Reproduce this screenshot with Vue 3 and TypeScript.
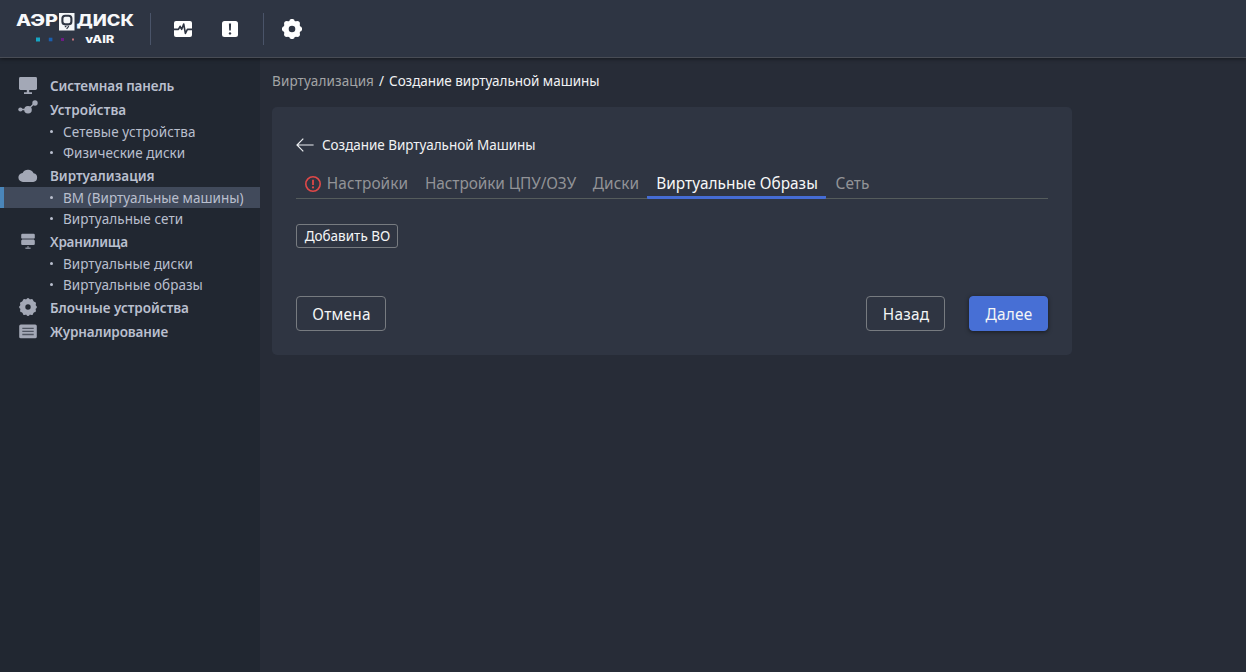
<script setup lang="ts">
type IconName = 'monitor' | 'devices' | 'cloud' | 'storage' | 'gear' | 'log'

interface SubItem {
  label: string
  spacing: number
  active?: boolean
}

interface Section {
  label: string
  icon: IconName
  spacing: number
  children: SubItem[]
}

interface Tab {
  label: string
  width: number
  spacing: number
  error?: boolean
  active?: boolean
}

const sections: Section[] = [
  { label: 'Системная панель', icon: 'monitor', spacing: -0.14, children: [] },
  {
    label: 'Устройства',
    icon: 'devices',
    spacing: 0.02,
    children: [
      { label: 'Сетевые устройства', spacing: 0.13 },
      { label: 'Физические диски', spacing: 0.03 },
    ],
  },
  {
    label: 'Виртуализация',
    icon: 'cloud',
    spacing: -0.03,
    children: [
      { label: 'ВМ (Виртуальные машины)', spacing: 0.03, active: true },
      { label: 'Виртуальные сети', spacing: 0.08 },
    ],
  },
  {
    label: 'Хранилища',
    icon: 'storage',
    spacing: -0.22,
    children: [
      { label: 'Виртуальные диски', spacing: 0.03 },
      { label: 'Виртуальные образы', spacing: 0.04 },
    ],
  },
  { label: 'Блочные устройства', icon: 'gear', spacing: -0.03, children: [] },
  { label: 'Журналирование', icon: 'log', spacing: -0.12, children: [] },
]

const tabs: Tab[] = [
  { label: 'Настройки', width: 120, spacing: 0.1, error: true },
  { label: 'Настройки ЦПУ/ОЗУ', width: 168, spacing: -0.07 },
  { label: 'Диски', width: 63, spacing: 0.1 },
  { label: 'Виртуальные Образы', width: 179, spacing: 0.03, active: true },
  { label: 'Сеть', width: 52, spacing: 0.1 },
]

const px = (n: number): string => `${n}px`

// Centres of the rounded teeth placed around a gear body
const teeth = (count: number, radius: number): { x: number; y: number }[] =>
  Array.from({ length: count }, (_, i) => {
    const a = (i * 2 * Math.PI) / count
    return { x: 10 + radius * Math.sin(a), y: 10 - radius * Math.cos(a) }
  })

const headerTeeth = teeth(8, 7.4)
const menuTeeth = teeth(12, 7.4)
</script>

<template>
  <div class="app">
    <header class="header">
      <svg class="logo" width="134" height="57" viewBox="0 0 134 57">
        <g class="brand">
          <text x="16" y="25.8" textLength="42" lengthAdjust="spacingAndGlyphs">АЭР</text>
          <text x="76.5" y="25.8" textLength="57.5" lengthAdjust="spacingAndGlyphs">ДИСК</text>
        </g>
        <rect x="59" y="13" width="15.5" height="17.5" fill="#f4f6f8" />
        <rect x="62.4" y="15.8" width="9" height="8.6" rx="2.8" fill="none" stroke="#2e3543" stroke-width="2.1" />
        <path d="M68.8 26.2l-2.2 2.8M64.8 26.6h1.6" stroke="#2e3543" stroke-width="1.2" fill="none" />
        <rect x="36" y="37.5" width="4" height="4" fill="#16a6c4" />
        <rect x="48.8" y="37.7" width="3.6" height="3.6" fill="#1b5fae" />
        <rect x="61" y="38" width="3" height="3" fill="#6d1b83" />
        <rect x="72" y="38.5" width="2" height="2" fill="#c0737c" />
        <text class="product" x="85.3" y="43" textLength="29" lengthAdjust="spacingAndGlyphs">vAIR</text>
      </svg>
      <span class="divider divider-first"></span>
      <svg class="tool" width="20" height="18" viewBox="0 0 20 18">
        <rect x="1" y="1" width="18" height="16" rx="2" fill="#fff" />
        <path d="M0 9.4h5.4l1.7-3.1 1.6 3 2-5.3 1.7 9.4 2-4h5.6" fill="none" stroke="#2e3543" stroke-width="1.6" stroke-linejoin="round" />
      </svg>
      <svg class="tool alert" width="18" height="18" viewBox="0 0 18 18">
        <rect x="1" y="1" width="16" height="16" rx="2.5" fill="#fff" />
        <path d="M7.9 3.6h2.2l-.3 6.8H8.2z" fill="#2e3543" />
        <circle cx="9" cy="13.4" r="1.2" fill="#2e3543" />
      </svg>
      <span class="divider divider-second"></span>
      <svg class="tool" width="20" height="20" viewBox="0 0 20 20">
        <g fill="#fff">
          <path fill-rule="evenodd" d="M10 1.4a8.6 8.6 0 1 0 0 17.2a8.6 8.6 0 1 0 0-17.2zM10 6.7a3.3 3.3 0 1 1 0 6.6a3.3 3.3 0 1 1 0-6.6z" />
          <circle v-for="(t, i) in headerTeeth" :key="i" :cx="t.x" :cy="t.y" r="2.7" />
        </g>
      </svg>
    </header>

    <div class="body">
      <nav class="sidebar">
        <template v-for="section in sections" :key="section.label">
          <div class="section">
            <svg class="section-icon" width="20" height="20" viewBox="0 0 20 20">
              <template v-if="section.icon === 'monitor'">
                <rect x="1" y="2" width="18" height="13" rx="1.4" />
                <path d="M8.8 15h2.4v2.2H14V19H6v-1.8h2.8z" />
              </template>
              <template v-else-if="section.icon === 'devices'">
                <path d="M2.3 10.5H10L16.7 4" fill="none" stroke="#a3a8b6" stroke-width="1.3" />
                <circle cx="2.4" cy="10.5" r="2.1" />
                <circle cx="10" cy="10.7" r="3.8" />
                <circle cx="17" cy="4" r="2.7" />
              </template>
              <path
                v-else-if="section.icon === 'cloud'"
                d="M5.2 16.9a4.5 4.5 0 0 1-.6-9A6.1 6.1 0 0 1 15.6 8.3 4.35 4.35 0 0 1 15.2 16.9z"
              />
              <template v-else-if="section.icon === 'storage'">
                <rect x="3.2" y="2.8" width="13.6" height="4.8" rx="1.2" />
                <rect x="4" y="7.6" width="12" height="1.2" opacity=".5" />
                <rect x="3.2" y="8.8" width="13.6" height="5.2" rx="1.2" />
                <path d="M9.4 15h1.2v1.5h2V18H7.4v-1.5h2z" opacity=".75" />
              </template>
              <g v-else-if="section.icon === 'gear'">
                <path fill-rule="evenodd" d="M10 1.9a8.1 8.1 0 1 0 0 16.2a8.1 8.1 0 1 0 0-16.2zM10 7.3a2.7 2.7 0 1 1 0 5.4a2.7 2.7 0 1 1 0-5.4z" />
                <circle v-for="(t, i) in menuTeeth" :key="i" :cx="t.x" :cy="t.y" r="1.5" />
              </g>
              <template v-else>
                <rect x="1.2" y="3.5" width="17.6" height="13.8" rx="1.6" />
                <path d="M4.3 7.3h11.4M4.3 10.4h11.4M4.3 13.5h11.4" stroke="#4f5562" stroke-width="1.3" />
              </template>
            </svg>
            <span :style="{ letterSpacing: px(section.spacing) }">{{ section.label }}</span>
          </div>
          <div v-for="child in section.children" :key="child.label" class="sub" :class="{ active: child.active }">
            <span class="bullet"></span>
            <span class="sub-label" :style="{ letterSpacing: px(child.spacing) }">{{ child.label }}</span>
          </div>
        </template>
      </nav>

      <main class="main">
        <div class="breadcrumbs">
          <span class="crumb">Виртуализация</span>
          <span class="slash">/</span>
          <span class="current">Создание виртуальной машины</span>
        </div>

        <section class="card">
          <div class="card-title">
            <svg width="18" height="14" viewBox="0 0 18 14">
              <path d="M7.3.7L1 7l6.3 6.3M1 7h16.6" fill="none" stroke="#eceef1" stroke-width="1.2" />
            </svg>
            <span class="current">Создание Виртуальной Машины</span>
          </div>

          <div class="tabs">
            <div v-for="tab in tabs" :key="tab.label" class="tab" :class="{ active: tab.active }" :style="{ width: px(tab.width) }">
              <svg v-if="tab.error" class="error" width="16" height="16" viewBox="0 0 16 16">
                <circle cx="8" cy="8" r="7.2" fill="none" stroke="#e04848" stroke-width="1.6" />
                <path d="M8 3.7v5.4" stroke="#e04848" stroke-width="1.8" />
                <circle cx="8" cy="11.4" r="1.1" fill="#e04848" />
              </svg>
              <span :style="{ letterSpacing: px(tab.spacing) }">{{ tab.label }}</span>
            </div>
          </div>

          <button class="button add">Добавить ВО</button>

          <div class="actions">
            <button class="button cancel">Отмена</button>
            <button class="button back">Назад</button>
            <button class="button next">Далее</button>
          </div>
        </section>
      </main>
    </div>
  </div>
</template>

<style>
body {
  margin: 0;
  background: #272c37;
}
</style>

<style scoped>
.app {
  display: flex;
  flex-direction: column;
  height: 672px;
  overflow: hidden;
  background: #272c37;
  color: #f1f2f4;
  font-family: 'Noto Sans', sans-serif;
  font-size: 13.5px;
  white-space: nowrap;
}

.header {
  display: flex;
  align-items: center;
  flex: none;
  box-sizing: border-box;
  height: 58px;
  background: #2e3543;
  border-bottom: 1px solid #484c55;
  box-shadow: 0 1px 4px rgba(0, 0, 0, 0.45);
  z-index: 1;
}

.logo {
  flex: none;
}

.brand {
  fill: #f7f8fa;
  font: 800 15.4px 'Inter', sans-serif;
}

.product {
  fill: #f7f8fa;
  font: 800 9.8px 'Inter', sans-serif;
}

.divider {
  flex: none;
  width: 1px;
  height: 32px;
  background: #4a5469;
}

.divider-first {
  margin: 0 21.5px 0 16px;
}

.divider-second {
  margin: 0 18px 0 24px;
}

.tool {
  flex: none;
}

.alert {
  margin-left: 28.5px;
}

.body {
  display: flex;
  flex: 1;
  min-height: 0;
}

.sidebar {
  flex: none;
  box-sizing: border-box;
  width: 260px;
  padding-top: 15px;
  background: #212731;
  color: #b9bfce;
}

.section {
  display: flex;
  align-items: center;
  height: 24px;
  padding-left: 18px;
  font-weight: 600;
  line-height: 24px;
}

.section > span {
  padding-top: 1px;
}

.section-icon {
  flex: none;
  margin-right: 12px;
  fill: #a3a8b6;
}

.sub {
  display: flex;
  align-items: center;
  box-sizing: border-box;
  height: 21px;
  padding-left: 50px;
  line-height: 21px;
}

.sub.active {
  padding-left: 46px;
  border-left: 4px solid #4a86ba;
  background: #414a5b;
}

.sub-label {
  padding-top: 2px;
}

.bullet {
  width: 3px;
  height: 3px;
  margin-right: 10px;
  border-radius: 50%;
  background: #b9bfce;
}

.main {
  flex: 1;
  padding: 12px 12px 0;
}

.breadcrumbs {
  display: flex;
  height: 22px;
  margin-bottom: 15px;
  line-height: 22px;
}

.crumb {
  color: #a3a4a6;
  letter-spacing: 0.11px;
}

.current {
  letter-spacing: -0.04px;
}

.slash {
  width: 15px;
  text-align: center;
}

.card {
  box-sizing: border-box;
  width: 800px;
  height: 248px;
  padding: 24px;
  border-radius: 5px;
  background: #2f3542;
}

.card-title {
  display: flex;
  align-items: center;
  gap: 8px;
  height: 28px;
}

.tabs {
  display: flex;
  box-sizing: border-box;
  height: 33px;
  margin-top: 7px;
  border-bottom: 1px solid #555c5c;
  color: #929397;
  font-size: 15.4px;
}

.tab {
  display: flex;
  align-items: center;
  justify-content: center;
  box-sizing: border-box;
  height: 33px;
  padding-top: 5px;
  padding-left: 1px;
  border-bottom: 3px solid transparent;
  line-height: 24px;
}

.tab.active {
  border-bottom-color: #456cd4;
  border-radius: 0 0 1px 1px;
  color: #f7f7f7;
}

.error {
  flex: none;
  margin-right: 6px;
}

.button {
  box-sizing: border-box;
  height: 35px;
  padding: 2px 0 0 1px;
  border: 1px solid #777b80;
  border-radius: 4px;
  background: transparent;
  color: #f4f5f6;
  font-family: inherit;
  font-size: 15.4px;
  letter-spacing: 0.22px;
}

.button.add {
  display: block;
  width: 102px;
  height: 24px;
  margin-top: 25px;
  padding-top: 0;
  border-radius: 3px;
  font-size: 13.5px;
  line-height: 20px;
  letter-spacing: 0;
}

.actions {
  display: flex;
  margin-top: 48px;
}

.cancel {
  width: 90px;
}

.back {
  width: 79px;
  margin-left: auto;
}

.button.next {
  width: 79px;
  margin-left: 24px;
  border-color: #476fd5;
  background: #476fd5;
  box-shadow: 0 1px 4px rgba(0, 0, 0, 0.5);
}
</style>
